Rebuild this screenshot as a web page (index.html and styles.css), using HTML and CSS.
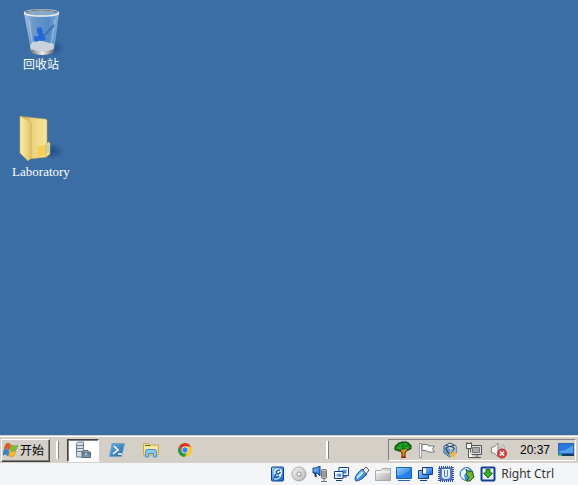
FILE: index.html
```html
<!DOCTYPE html>
<html lang="zh-CN">
<head>
<meta charset="utf-8">
<title>Desktop</title>
<link rel="stylesheet" href="styles.css">
</head>
<body>
<svg class="defs" aria-hidden="true">
  <defs>
    <linearGradient id="glass"><stop offset="0" stop-color="#b9d2ea"/><stop offset=".25" stop-color="#73a0cf"/><stop offset=".7" stop-color="#5990c9"/><stop offset="1" stop-color="#8fb9e2"/></linearGradient>
    <linearGradient id="metal"><stop offset="0" stop-color="#777"/><stop offset=".5" stop-color="#eee"/><stop offset="1" stop-color="#666"/></linearGradient>
    <linearGradient id="flap"><stop offset="0" stop-color="#fbefad"/><stop offset="1" stop-color="#e3c566"/></linearGradient>
    <linearGradient id="back"><stop offset="0" stop-color="#cda94c"/><stop offset=".5" stop-color="#ecd685"/><stop offset="1" stop-color="#f5e59c"/></linearGradient>
    <linearGradient id="blue" x1="0" y1="0" x2="1" y2="1"><stop offset="0" stop-color="#8fd0ff"/><stop offset="1" stop-color="#1464d2"/></linearGradient>
    <linearGradient id="steel" x1="0" y1="0" x2="1" y2="1"><stop offset="0" stop-color="#6faee0"/><stop offset="1" stop-color="#20669f"/></linearGradient>
    <linearGradient id="grey" x1="0" y1="0" x2="1" y2="1"><stop offset="0" stop-color="#fafafa"/><stop offset="1" stop-color="#aaa"/></linearGradient>
    <radialGradient id="shade"><stop offset="0" stop-color="#173f70" stop-opacity=".75"/><stop offset="1" stop-color="#173f70" stop-opacity="0"/></radialGradient>
  </defs>
</svg>
<main class="desktop">
  <a class="shortcut" href="#recycle">
    <svg width="48" height="48" viewBox="0 0 48 48">
      <ellipse cx="34" cy="40" rx="14" ry="8" fill="url(#shade)"/>
      <path d="M7 5H42L37 43Q25 49 14 43Z" fill="url(#glass)" opacity=".85"/>
      <path d="M13 37Q18 31 25 33T37 36L36 43Q25 47 14 43Z" fill="#c9d3dc"/>
      <path d="M14 41Q25 46 37 41L36 45Q25 49 15 45Z" fill="url(#metal)"/>
      <path d="M20 20l4-1 2 5-3 3-3-2zM24 24l3 2 2 6-5 1-4-4zM17 28l5 1 2 3-5 2-2-2z" fill="#2467d6"/>
      <path d="M12 12l4 27M38 12l-4 26" stroke="#c9def2" stroke-width="1" opacity=".6"/>
      <path d="M28 27L37 17" fill="none" stroke="#3a73b2" stroke-width="2"/>
      <ellipse cx="24.500" cy="5" rx="17" ry="3" fill="#86a9ca" stroke="#eee" stroke-width="1.500"/>
      <path d="M8 4Q24 0 41 4" fill="none" stroke="#666" stroke-width="1"/>
    </svg>
    <span>回收站</span>
  </a>
  <a class="shortcut shortcut-latin" href="#laboratory">
    <svg width="48" height="48" viewBox="0 0 48 48">
      <ellipse cx="34" cy="36" rx="13" ry="8" fill="url(#shade)"/>
      <path d="M4 1.500L28 4Q30 4 30 6V42L12 44Z" fill="url(#back)" stroke="#c2a554" stroke-width=".6"/>
      <path d="M20 32L30 29V40L20 42Z" fill="#f6cf59"/>
      <path d="M30 28Q33 26 33 29V39L29 42V32z" fill="#f8e9a2" stroke="#b99a4c" stroke-width=".6"/>
      <path d="M31 30v8" stroke="#8fc5ea" stroke-width="1.500"/>
      <path d="M3 1L12 6Q14 7 14 10V43L11 46L3 38Z" fill="url(#flap)" stroke="#c9ab55" stroke-width=".6"/>
    </svg>
    <span>Laboratory</span>
  </a>
</main>
<nav class="taskbar" aria-label="任务栏">
  <button class="start">
    <svg width="16" height="16" viewBox="0 0 16 16">
      <path d="M3 2Q6 0 8 3L6 8Q4 5 1 7Z" fill="#e45b20" stroke="#b9471d" stroke-width=".5"/><path d="M9 3Q12 5 15 3L13 8Q10 10 7 8Z" fill="#82bd34" stroke="#5b8d25" stroke-width=".5"/><path d="M1 8Q4 6 6 9L5 14Q3 11 0 13Z" fill="#3785d1" stroke="#235e9f" stroke-width=".5"/><path d="M7 9Q10 11 13 9L11 14Q8 16 6 14Z" fill="#f7bd22" stroke="#c3891b" stroke-width=".5"/>
    </svg>开始</button>
  <i class="grip"></i>
  <div class="tasks">
    <button class="task task-active" aria-label="服务器管理器">
      <svg width="16" height="18" viewBox="0 0 16 18"><path d="M1.500 2.500L3 1h5.500v15h-7z" fill="#d5e0e6" stroke="#6d8290"/><path d="M2 4.500h6M2 7.500h6M2 10.500h6" stroke="#6d8290"/><path d="M7 11h8.500v5.500H7z" fill="#7d95a8" stroke="#4e687c"/><path d="M9 11V9.500h4V11M7 13h8" fill="none" stroke="#4e687c"/><path d="M11 12v2" stroke="#fff"/></svg>
    </button>
    <button class="task" aria-label="PowerShell">
      <svg width="18" height="16" viewBox="0 0 18 16"><path d="M4 1.500h12.500l-3 13H1.500z" fill="url(#steel)" stroke="#6da4d2"/><path d="M6 4l4 4-5 4M10 12h4" fill="none" stroke="#fff" stroke-width="1.600"/></svg>
    </button>
    <button class="task" aria-label="资源管理器">
      <svg width="16" height="16" viewBox="0 0 16 16"><path d="M.5 3V1.500h5L7 3h8.500v10H.5z" fill="#f5df8c" stroke="#c9a956"/><path d="M2 3.500h5" stroke="#407b35"/><path d="M1 6h14" stroke="#fff4bd"/><path d="M2.500 15V10Q2.500 7.500 5 7.500h6q2.500 0 2.500 2.500v5h-3v-3.500h-5V15z" fill="#8dcaf0" stroke="#498bc1"/></svg>
    </button>
    <button class="task" aria-label="Chrome">
      <svg width="16" height="16" viewBox="0 0 16 16"><circle cx="8" cy="8" r="7" fill="#fbc72c"/><path d="M2 4.400A7 7 0 0 1 14.100 4.600H8L5 9.500z" fill="#d13628"/><path d="M1.900 4.500A7 7 0 0 0 7.500 15L10.500 10 5 9.500z" fill="#299849"/><circle cx="8" cy="8" r="3.400" fill="#fff"/><circle cx="8" cy="8" r="2.700" fill="#3f82ee"/></svg>
    </button>
  </div>
  <i class="grip"></i>
  <div class="tray">
    <svg width="18" height="18" viewBox="0 0 18 18"><path d="M2 4h2V2h3V1h6v1h2v2h2v4h-2v1h-3V8H8v2H4V9H1V6z" fill="#168a1c" stroke="#063b08"/><path d="M5 4h3M10 3h3M3 7h5M11 7h4" stroke="#39c43c"/><path d="M6 9l2 3v4h3v-4l3-4" fill="#c99a12" stroke="#6b1608"/><path d="M7 16.500h5" stroke="#b51616"/></svg>
    <svg width="16" height="18" viewBox="0 0 16 18"><path d="M1.500 2v15" stroke="#777" stroke-width="2"/><path d="M1.500 3v13" stroke="#fff"/><path d="M3 3.500h5l2 1.500h5.500l-2 3 2 3H9L7 9.500H3z" fill="#fff" stroke="#777"/></svg>
    <svg width="16" height="18" viewBox="0 0 16 18"><path d="M8 2l6 3v7l-6 4-6-4V5z" fill="#dbe7f1" stroke="#2a4a69"/><path d="M2 5l6 3v8l-6-4z" fill="#6c98c0"/><path d="M14 5L8 8v8l6-4z" fill="#9fbdd9"/><path d="M4 4.500l8 2M12 4.500l-8 2M3.500 7l3.500 6M12.500 7L9 13" stroke="#17334f"/><path d="M11 9l1 3 3 .3-2.400 2 .7 3L11 15.500 8.700 17l.6-3-2.300-2h3z" fill="#ffb529"/></svg>
    <svg width="18" height="18" viewBox="0 0 18 18"><path d="M5.500 4.500h11v9h-11z" fill="#ddd" stroke="#555"/><path d="M7.500 6.500h7v5h-7z" fill="#aaa" stroke="#777"/><path d="M8 16.500h8M12 14v2" stroke="#555"/><path d="M1.500 2.500h5v5h-5zM3.500 8v8.500H8" fill="#fff" stroke="#555"/><path d="M2 1v2M6 1v2" stroke="#555"/></svg>
    <svg width="18" height="18" viewBox="0 0 18 18"><path d="M1.500 6H4l4-4v14l-4-4H1.500z" fill="#f4f4f4" stroke="#888"/><path d="M10 5q2 2 1 6M12 3q4 3 3 7" fill="none" stroke="#aaa"/><circle cx="12" cy="12.500" r="4.500" fill="#d84841" stroke="#bd302b"/><path d="M10 10.500l4 4m0-4l-4 4" stroke="#fff" stroke-width="1.500"/></svg>
    <time>20:37</time>
    <button class="show-desktop" aria-label="显示桌面"><svg width="16" height="14" viewBox="0 0 16 14"><path d="M0 0h16v13H0z" fill="#2865b6"/><path d="M1 1h14v9H1z" fill="#2679d6"/><path d="M1 8Q8 8 15 2v8H1z" fill="#54a2e9"/><path d="M0 11h16v2H0z" fill="#163d68"/><path d="M0 11h4v2H0z" fill="#49af77"/></svg></button>
  </div>
</nav>
<footer class="status">
  <svg viewBox="0 0 16 16"><rect x="1.500" y="1" width="12" height="14" rx="1" fill="url(#blue)" stroke="#123c83"/><circle cx="8" cy="6.500" r="4" fill="#e9f6ff"/><path d="M10 4Q5 4.500 6.500 7t4-1M6 8l-2 5 5-3" fill="none" stroke="#1d5dab" stroke-width="1.500"/><path d="M4 13q4 1 7-3" fill="none" stroke="#fff"/></svg>
  <svg viewBox="0 0 16 16"><circle cx="8" cy="8" r="7" fill="url(#grey)" stroke="#aaa"/><circle cx="8" cy="8" r="4.500" fill="none" stroke="#ddd"/><circle cx="8" cy="8" r="2" fill="#fff" stroke="#999"/></svg>
  <svg viewBox="0 0 16 16"><path d="M1 2h3l4-2v10L5 7H1z" fill="url(#blue)" stroke="#123c83"/><path d="M3 7l1 4" stroke="#123c83" stroke-width="2"/><rect x="9.500" y="3.500" width="5" height="9" rx="1" fill="#bbb" stroke="#777"/><path d="M10 6h4M10 8h4M10 10h4M12 13v3M9 15.500h6" stroke="#777"/></svg>
  <svg viewBox="0 0 16 16"><path d="M6 1.500h9.500v8H6z" fill="#fff" stroke="#123c83"/><path d="M8 3.500h5.500v4H8z" fill="url(#blue)"/><path d="M10 11h4" stroke="#123c83"/><path d="M1.500 5.500H10v7H1.500zM3 14.500h6" fill="#fff" stroke="#123c83"/><path d="M3.500 7.500H8v3H3.500z" fill="url(#blue)"/></svg>
  <svg viewBox="0 0 16 16"><path d="M2 15L1 13Q1 9 8 3l5 5Q7 15 2 15z" fill="url(#blue)" stroke="#1853a5"/><path d="M9 4l3-3 3 3-3 4z" fill="#eee" stroke="#555"/><path d="M3 12l6-6" stroke="#c4ebff" stroke-width="2"/></svg>
  <svg viewBox="0 0 16 16"><path d="M.5 14.500v-10h5l2-2h8v12z" fill="url(#grey)" stroke="#aaa"/><path d="M1 6h14" stroke="#fff"/></svg>
  <svg viewBox="0 0 16 16"><path d="M.5 1.500h15v11H.5z" fill="url(#blue)" stroke="#1764bd"/><path d="M1 10Q9 9 15 3v9H1z" fill="#2680ec"/><path d="M2 14.500h12" stroke="#1764bd"/></svg>
  <svg viewBox="0 0 16 16"><path d="M1.500 4.500h10v8h-10zM3 14.500h7" fill="url(#blue)" stroke="#123c83"/><path d="M5.500 1.500h10v7h-10z" fill="url(#blue)" stroke="#123c83"/><path d="M6 2.500h3v5H6z" fill="#fff"/></svg>
  <svg viewBox="0 0 16 16"><rect x="1" y="1" width="14" height="14" fill="none" stroke="#3452a4" stroke-width="2" stroke-dasharray="1 1"/><rect x="2" y="2" width="12" height="12" rx="1" fill="#5c83d4" stroke="#3452a4"/><path d="M4 3h8v7q0 3-4 3t-4-3z" fill="#e4efff"/><path d="M6.500 4v5q0 2 1.500 2t1.500-2V4" fill="none" stroke="#5279c5"/></svg>
  <svg viewBox="0 0 16 16"><circle cx="7.500" cy="8" r="6.500" fill="url(#blue)" stroke="#4a7cae"/><path d="M2 6l5-4 3 1-5 6 1 5-4-3z" fill="#e6f5ff"/><path d="M7 3l3 3 3-1 2 6-4 4H7l3-3-3-4 1-1z" fill="#6eb536" stroke="#285f1e"/></svg>
  <svg viewBox="0 0 16 16"><rect x="1.500" y="1.500" width="13" height="13" rx="1" fill="#e9f3ff" stroke="#183f94" stroke-width="2"/><path d="M6 3.500h4V7h2.500L8 12 3.500 7H6z" fill="#37ba20" stroke="#176c14"/></svg>
  <span>Right Ctrl</span>
</footer>
</body>
</html>
```
FILE: styles.css
```css
* { box-sizing: border-box; }
body {
  display: flex;
  flex-direction: column;
  min-height: 100vh;
  margin: 0;
  background: #3a6ea5;
  font: 12px/16px "Noto Sans CJK SC", sans-serif;
}
svg { display: block; flex: none; }
button { padding: 0; border: 0; background: none; font: inherit; color: #000; }
.defs { position: absolute; width: 0; height: 0; }
.desktop {
  display: flex;
  flex: 1;
  flex-direction: column;
  align-items: flex-start;
  gap: 43px;
  padding: 8px 3px;
}
.shortcut {
  display: flex;
  flex-direction: column;
  align-items: center;
  width: 76px;
  color: #fff;
  text-decoration: none;
}
.shortcut-latin { font: 13px/18px "Liberation Serif", serif; }
.taskbar {
  display: flex;
  align-items: center;
  height: 28px;
  padding: 1px 2px 0 0;
  border-top: 1px solid #d4d0c8;
  background: #d4d0c8;
  box-shadow: inset 0 1px #fff;
}
.start {
  display: flex;
  align-items: center;
  gap: 1px;
  height: 23px;
  width: 49px;
  margin-left: 1px;
  padding-left: 1px;
  border: 1px solid;
  border-color: #fff #404040 #404040 #fff;
  box-shadow: inset -1px -1px #808080;
  white-space: nowrap;
}
.grip {
  width: 3px;
  height: 18px;
  margin: 0 8px 0 6px;
  border-left: 2px solid #fff;
  border-right: 1px solid #808080;
}
.tasks { display: flex; flex: 1; gap: 2px; }
.task { display: grid; place-items: center; width: 32px; height: 23px; }
.task-active {
  border: 1px solid;
  border-color: #404040 #fff #fff #404040;
  background: #fff;
  box-shadow: inset 1px 1px #808080;
}
.tray {
  display: flex;
  align-items: center;
  gap: 7px;
  height: 22px;
  margin-left: 51px;
  padding: 0 1px 0 5px;
  border: 1px solid;
  border-color: #808080 #fff #fff #808080;
}
.tray time { padding: 0 1px 0 5px; font-family: "Liberation Sans", sans-serif; }
.status {
  display: flex;
  align-items: center;
  justify-content: flex-end;
  gap: 5px;
  height: 22px;
  padding-right: 24px;
  background: #f4f5f7;
  color: #333;
  font-family: "Noto Sans", sans-serif;
}
.status svg { width: 16px; height: 16px; }
```
